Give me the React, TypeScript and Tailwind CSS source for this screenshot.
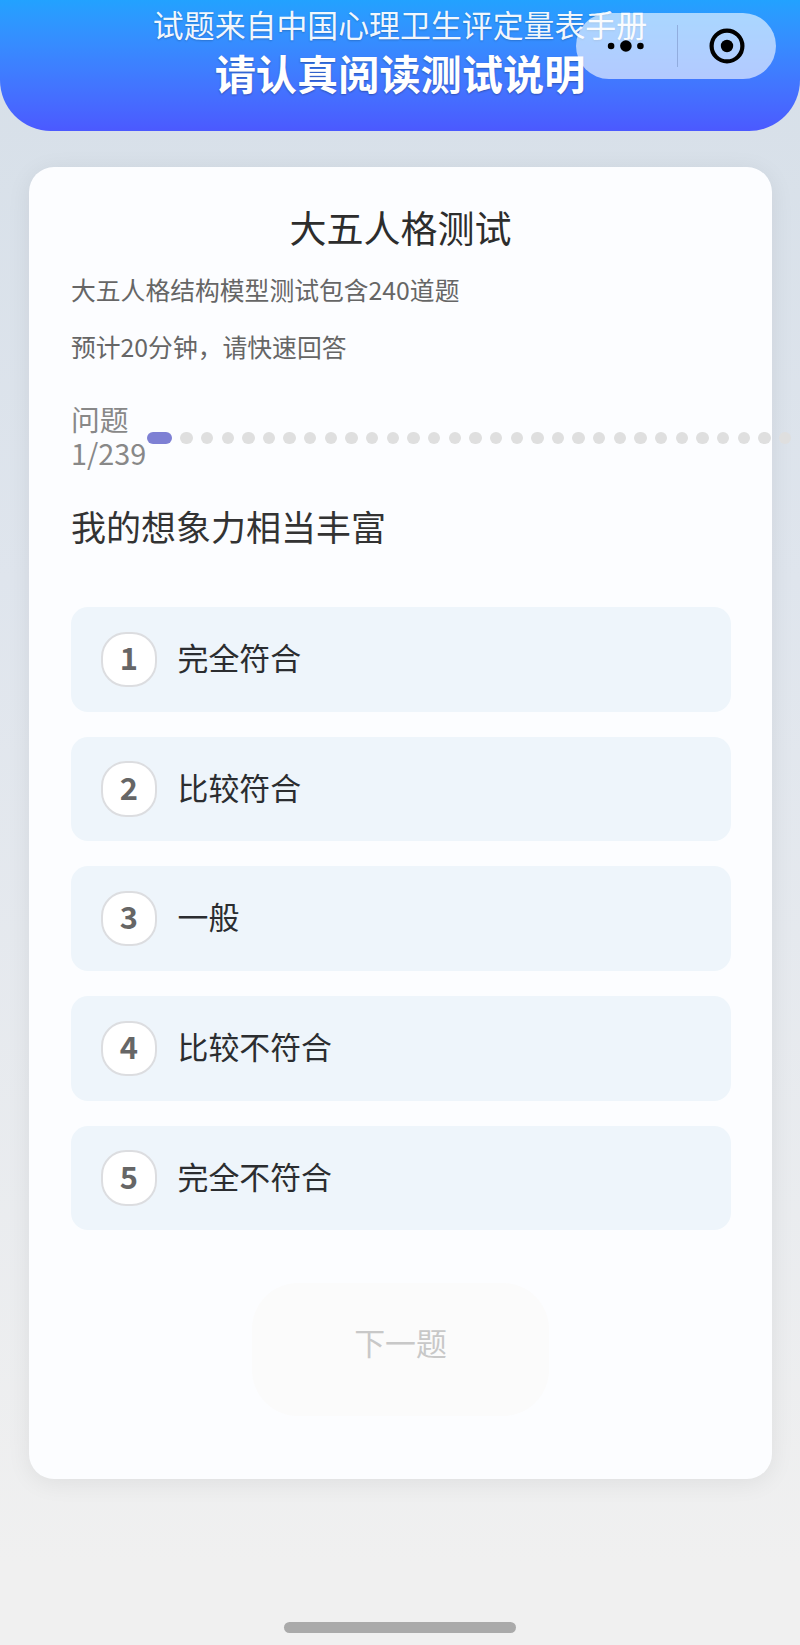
const FONT = "font-['Noto_Sans_CJK_SC',sans-serif]"

const OPTIONS = ["完全符合", "比较符合", "一般", "比较不符合", "完全不符合"]

const DOT_COUNT = 30

/** Capsule de la mini-app : menu + fermeture. */
function Capsule() {
  return (
    <div className="absolute left-[575.5px] top-[13px] flex h-[65.5px] w-[200px] items-center rounded-full bg-white/60">
      <div className="flex h-full w-[101px] items-center justify-center">
        <svg width="40" height="14" viewBox="0 0 40 14">
          <circle cx="5.1" cy="7" r="3.3" />
          <circle cx="19.9" cy="7" r="5.8" />
          <circle cx="34.4" cy="7" r="3.3" />
        </svg>
      </div>
      <div className="h-[42px] w-px bg-[#8aa4d6]/80" />
      <div className="flex h-full flex-1 items-center justify-center">
        <svg width="36" height="36" viewBox="0 0 36 36">
          <circle cx="18" cy="18" r="15.4" fill="none" stroke="black" strokeWidth="4.2" />
          <circle cx="18" cy="18" r="6.2" />
        </svg>
      </div>
    </div>
  )
}

function Header() {
  return (
    <header className="relative h-[130.5px] rounded-b-[51px] bg-linear-to-b from-[#22a2ff] to-[#4b59ff] pt-[4px] text-center text-white">
      <p className="h-10 text-[30.9px] leading-10 text-white/95 [text-shadow:0_1px_2px_rgba(0,0,0,0.2)]">
        试题来自中国心理卫生评定量表手册
      </p>
      <h1 className="h-14 text-[41.2px] font-bold leading-14 [text-shadow:0_1px_2px_rgba(0,0,0,0.3)]">
        请认真阅读测试说明
      </h1>
      <Capsule />
    </header>
  )
}

/** Progression : pastille active puis points qui débordent de la carte. */
function Progress() {
  return (
    <div className="mt-[30px] flex h-[68px] items-center">
      <div className="w-[76px] shrink-0 pb-[4px] text-[28.8px] leading-[34px] text-[#888888]">问题 1/239</div>
      <div className="flex gap-[8.25px]">
        <span className="h-[12.4px] w-[25px] shrink-0 rounded-full bg-[#7e80d4]" />
        {Array.from({ length: DOT_COUNT }, (_, i) => (
          <span key={i} className="size-[12.4px] shrink-0 rounded-full bg-[#dfdfdf]" />
        ))}
      </div>
    </div>
  )
}

function Option({ index, label }: { index: number; label: string }) {
  return (
    <li className="flex h-[104.7px] items-center gap-[21px] rounded-[17px] bg-[#eef5fb] pl-[30px]">
      <span className="flex size-[55.5px] items-center justify-center rounded-[25px] border-2 border-[#dcdde0] bg-white pb-[4px] text-[30.9px] font-bold leading-none text-[#666666]">
        {index}
      </span>
      <span className="pb-[4px] text-[30.9px] leading-none text-[#2b2d30]">{label}</span>
    </li>
  )
}

export default function App() {
  return (
    <div className={`${FONT} flex h-[1645px] w-[800px] flex-col overflow-hidden bg-linear-to-b from-[#d6dfe8] via-[#dfe5ed] via-35% to-[#f0f0f0] to-95%`}>
      <Header />

      <main className="ml-[29px] mt-[36.5px] h-[1311.5px] w-[743px] rounded-[25px] bg-[#fcfdff] px-[42px] pt-[35px] shadow-[0_4px_24px_rgba(0,0,0,0.07)]">
        <h2 className="h-[50px] text-center text-[37px] leading-[50px] text-[#2d2d2d]">大五人格测试</h2>
        <p className="mt-[9px] h-[56.5px] text-[24.8px] leading-[56.5px] text-[#666666]">大五人格结构模型测试包含240道题</p>
        <p className="h-[56.5px] text-[24.8px] leading-[56.5px] text-[#666666]">预计20分钟，请快速回答</p>

        <Progress />

        <h3 className="mt-[29px] h-[50px] text-[35px] leading-[50px] text-[#333333]">我的想象力相当丰富</h3>

        <ul className="mt-[56px] flex w-[660px] flex-col gap-[25px]">
          {OPTIONS.map((label, i) => (
            <Option key={label} index={i + 1} label={label} />
          ))}
        </ul>

        <button
          type="button"
          disabled
          className="mx-auto mt-[52.5px] flex h-[133.5px] w-[297px] items-center justify-center rounded-[46px] bg-[#fbfbfb] pb-[14px] text-[30.9px] leading-none text-[#c8c8c8]"
        >
          下一题
        </button>
      </main>

      <div className="mx-auto mb-[12.5px] mt-auto h-[10.5px] w-[232px] shrink-0 rounded-full bg-[#aaaaaa]" />
    </div>
  )
}
